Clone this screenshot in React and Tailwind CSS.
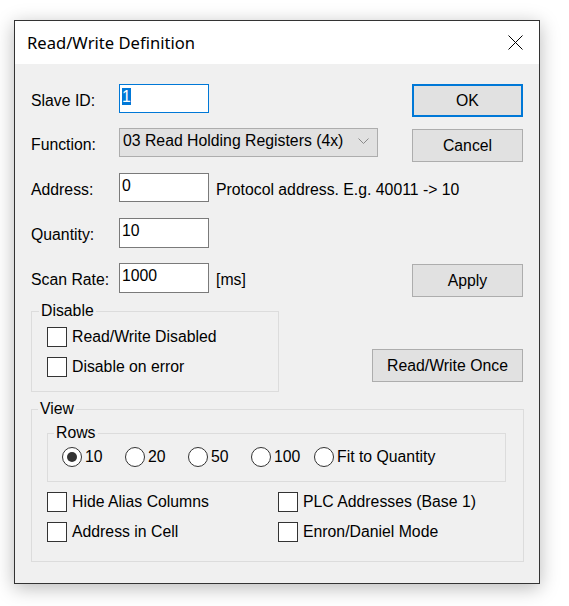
import React from "react";

const Checkbox = ({ label }) => (
  <div className="flex items-center h-[20px]">
    <div className="w-[20px] h-[20px] border border-[#333333] bg-white shrink-0" />
    <span className="ml-[5px] whitespace-nowrap">{label}</span>
  </div>
);

const Radio = ({ label, checked, w }) => (
  <div className={`flex items-center h-[20px] ${w}`}>
    <div className="w-[20px] h-[20px] rounded-full border border-[#333333] bg-white shrink-0 flex items-center justify-center">
      {checked && <div className="w-[10px] h-[10px] rounded-full bg-[#333333]" />}
    </div>
    <span className="ml-[3px] whitespace-nowrap">{label}</span>
  </div>
);

const Button = ({ children, w = "w-[111px]", focus }) => (
  <div
    className={`${w} h-[33px] flex items-center justify-center bg-[#e1e1e1] ${
      focus ? "border-2 border-[#0078d7]" : "border border-[#adadad]"
    }`}
  >
    {children}
  </div>
);

const Label = ({ children }) => <div className="w-[88px] pt-[8px] whitespace-nowrap">{children}</div>;

const Input = ({ children, focus, h = "h-[29px]" }) => (
  <div
    className={`w-[90px] ${h} bg-white border ${focus ? "border-[#0078d7]" : "border-[#7a7a7a]"} pt-[3px] pl-[2px]`}
  >
    {children}
  </div>
);

export default function App() {
  return (
    <div
      className="w-[569px] h-[606px] bg-white pt-[20px] pl-[14px] text-black text-[15.8px] leading-[18px]"
      style={{ fontFamily: '"Liberation Sans", Arial, sans-serif' }}
    >
      <div className="w-[526px] h-[564px] border border-[#333333] bg-[#f0f0f0] flex flex-col shadow-[0_4px_18px_rgba(0,0,0,0.28)]">
        {/* Title bar */}
        <div className="h-[43px] bg-white flex items-center justify-between pl-[12px] pr-[16px]">
          <span className="text-[16.6px]" style={{ fontFamily: '"Noto Sans", "Open Sans", sans-serif' }}>
            Read/Write Definition
          </span>
          <svg width="15" height="15" viewBox="0 0 15 15" className="shrink-0">
            <path d="M0.5 0.5 L14.5 14.5 M14.5 0.5 L0.5 14.5" stroke="#000" strokeWidth="1" />
          </svg>
        </div>

        {/* Body */}
        <div className="flex-1 pt-[20px] pl-[16px] pr-[16px] flex flex-col">
          {/* Row 1 */}
          <div className="h-[44px] flex justify-between items-start">
            <div className="flex">
              <Label>Slave ID:</Label>
              <Input focus>
                <span className="bg-[#0078d7] text-white">1</span>
              </Input>
            </div>
            <Button focus>OK</Button>
          </div>
          {/* Row 2 */}
          <div className="h-[45px] flex justify-between items-start">
            <div className="flex">
              <Label>Function:</Label>
              <div className="w-[259px] h-[29px] bg-[#e1e1e1] border border-[#adadad] pt-[3px] pl-[3px] pr-[8px] flex justify-between">
                <span className="whitespace-nowrap">03 Read Holding Registers (4x)</span>
                <svg width="11" height="7" viewBox="0 0 11 7" className="mt-[6px]">
                  <path d="M0.5 0.5 L5.5 5.5 L10.5 0.5" fill="none" stroke="#8a8a8a" strokeWidth="1" />
                </svg>
              </div>
            </div>
            <div className="mt-[1px]">
              <Button>Cancel</Button>
            </div>
          </div>
          {/* Row 3 */}
          <div className="h-[45px] flex items-start">
            <Label>Address:</Label>
            <Input>0</Input>
            <div className="ml-[7px] pt-[8px] whitespace-nowrap">Protocol address. E.g. 40011 -&gt; 10</div>
          </div>
          {/* Row 4 */}
          <div className="h-[45px] flex items-start">
            <Label>Quantity:</Label>
            <Input h="h-[30px]">10</Input>
          </div>
          {/* Row 5 */}
          <div className="h-[39px] flex justify-between items-start">
            <div className="flex">
              <Label>Scan Rate:</Label>
              <Input h="h-[30px]">1000</Input>
              <div className="ml-[7px] pt-[8px]">[ms]</div>
            </div>
            <div className="mt-[1px]">
              <Button>Apply</Button>
            </div>
          </div>
          {/* Disable row */}
          <div className="h-[90px] flex justify-between items-start">
            <fieldset className="w-[248px] h-[90px] border border-[#dcdcdc]">
              <legend className="ml-[7px] px-[2px] leading-[18px]">Disable</legend>
              <div className="mt-[7px] pl-[15px] flex flex-col gap-[10px]">
                <Checkbox label="Read/Write Disabled" />
                <Checkbox label="Disable on error" />
              </div>
            </fieldset>
            <div className="mt-[47px]">
              <Button w="w-[151px]">Read/Write Once</Button>
            </div>
          </div>
          {/* View */}
          <fieldset className="mt-[8px] w-[493px] h-[162px] border border-[#dcdcdc]">
            <legend className="ml-[6px] px-[2px] leading-[18px]">View</legend>
            <div className="pl-[15px]">
              <fieldset className="mt-[6px] w-[459px] h-[58px] border border-[#dcdcdc]">
                <legend className="ml-[6px] px-[2px] leading-[18px]">Rows</legend>
                <div className="mt-[5px] pl-[14px] flex">
                  <Radio label="10" checked w="w-[63px]" />
                  <Radio label="20" w="w-[63px]" />
                  <Radio label="50" w="w-[63px]" />
                  <Radio label="100" w="w-[63px]" />
                  <Radio label="Fit to Quantity" w="" />
                </div>
              </fieldset>
              <div className="mt-[10px] grid grid-cols-[231px_1fr] gap-y-[10px]">
                <Checkbox label="Hide Alias Columns" />
                <Checkbox label="PLC Addresses (Base 1)" />
                <Checkbox label="Address in Cell" />
                <Checkbox label="Enron/Daniel Mode" />
              </div>
            </div>
          </fieldset>
        </div>
      </div>
    </div>
  );
}
